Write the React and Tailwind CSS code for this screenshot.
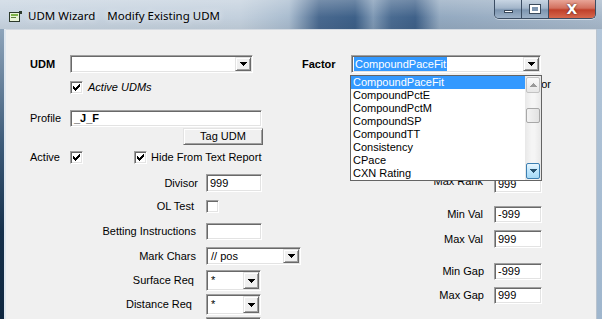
import React from "react";

const sunken =
  "bg-white border border-t-[#a0a0a0] border-l-[#a0a0a0] border-b-white border-r-white shadow-[inset_1px_1px_0_#696969,inset_-1px_-1px_0_#e3e3e3]";
const raised =
  "bg-[#f0f0f0] border border-t-[#e3e3e3] border-l-[#e3e3e3] border-b-[#696969] border-r-[#696969] shadow-[inset_1px_1px_0_#ffffff,inset_-1px_-1px_0_#a0a0a0]";

function Arrow({ color = "#000" }) {
  return (
    <svg width="7" height="4" shapeRendering="crispEdges">
      <rect x="0" y="0" width="7" height="1" fill={color} />
      <rect x="1" y="1" width="5" height="1" fill={color} />
      <rect x="2" y="2" width="3" height="1" fill={color} />
      <rect x="3" y="3" width="1" height="1" fill={color} />
    </svg>
  );
}

function Combo({ className = "", children }) {
  return (
    <div className={`${sunken} flex p-px ${className}`}>
      <div className="flex-1 flex items-center pl-[3px] overflow-hidden whitespace-nowrap">{children}</div>
      <div className={`${raised} w-[16px] flex items-center justify-center`}>
        <Arrow />
      </div>
    </div>
  );
}

function TextBox({ className = "", children }) {
  return <div className={`${sunken} flex items-center pl-[3px] whitespace-nowrap ${className}`}>{children}</div>;
}

function Check({ checked }) {
  // classic 7x7 tick, one column at a time
  const cols = [2, 3, 4, 3, 2, 1, 0];
  return (
    <div className={`${sunken} w-[13px] h-[13px] flex items-center justify-center shrink-0`}>
      {checked && (
        <svg width="7" height="7" shapeRendering="crispEdges">
          {cols.map((y, x) => (
            <rect key={x} x={x} y={y} width="1" height="3" fill="#000" />
          ))}
        </svg>
      )}
    </div>
  );
}

function Row({ label, pr, mt, h, children }) {
  return (
    <div className={`flex items-center ${mt} ${h}`}>
      <div className={`w-[200px] text-right ${pr}`}>{label}</div>
      {children}
    </div>
  );
}

function RRow({ label, pr, mt, h, labelClass = "", children }) {
  return (
    <div className={`flex items-center ${mt} ${h}`}>
      <div className={`w-[192px] text-right ${pr} ${labelClass}`}>{label}</div>
      {children}
    </div>
  );
}

const factors = [
  "CompoundPaceFit",
  "CompoundPctE",
  "CompoundPctM",
  "CompoundSP",
  "CompoundTT",
  "Consistency",
  "CPace",
  "CXN Rating",
];

function TitleBar() {
  return (
    <div className="h-[29px] shrink-0 flex items-start bg-[linear-gradient(90deg,#c9d5e1_0%,#c3d0dd_40%,#a9bccf_48%,#49698f_53%,#3d6088_59%,#7f99b5_62%,#4a6b91_65%,#3f6189_69%,#93a9c0_73%,#a8b9cb_100%)] relative">
      <div className="absolute inset-0 bg-[linear-gradient(180deg,rgba(255,255,255,0.25)_0%,rgba(255,255,255,0)_60%,rgba(0,0,0,0.05)_100%)]" />
      <div className="relative flex items-center pt-[9px] pl-[9px]">
        <svg width="13" height="11" viewBox="0 0 13 11" shapeRendering="crispEdges">
          <rect x="0.5" y="1.5" width="10" height="9" fill="#eaf4d8" stroke="#2c3a2c" />
          <rect x="2" y="3" width="7" height="2" fill="#7fb34a" />
          <rect x="2" y="6" width="5" height="1" fill="#5a7f3a" />
          <rect x="10" y="0" width="3" height="3" fill="#2c3a2c" />
        </svg>
        <span className="ml-[6px] font-['Noto_Sans',sans-serif] text-[11.5px] leading-[14px] text-black [text-shadow:0_0_6px_rgba(255,255,255,0.9)] whitespace-pre">
          UDM Wizard    Modify Existing UDM
        </span>
      </div>
      <div className="relative ml-auto mr-[6px] flex h-[19px] rounded-b-[5px] border border-t-0 border-[#3b4d63] overflow-hidden shadow-[0_1px_0_rgba(255,255,255,0.5)]">
        <div className="w-[27px] flex items-center justify-center border-r border-[#3b4d63] bg-[linear-gradient(180deg,#c8d5e3_0%,#a3b6ca_45%,#7d95b0_55%,#9db2c8_100%)]">
          <div className="w-[9px] h-[3px] bg-white border border-[#3a4a5c] mt-[4px]" />
        </div>
        <div className="w-[27px] flex items-center justify-center border-r border-[#3b4d63] bg-[linear-gradient(180deg,#c8d5e3_0%,#a3b6ca_45%,#7d95b0_55%,#9db2c8_100%)]">
          <div className="w-[10px] h-[8px] border-2 border-white outline outline-1 outline-[#3a4a5c] bg-[#7d95b0]" />
        </div>
        <div className="w-[46px] flex items-center justify-center bg-[linear-gradient(180deg,#e8a597_0%,#d2705e_45%,#c0402a_55%,#d6684d_100%)]">
          <span className="font-['DejaVu_Sans',sans-serif] font-bold text-[14px] leading-none text-white [text-shadow:0_0_2px_#3a1a10]">X</span>
        </div>
      </div>
    </div>
  );
}

function DropList() {
  return (
    <div className="absolute left-[344px] top-[45px] w-[192px] h-[106px] bg-white border border-[#646464] flex">
      <div className="flex-1 flex flex-col">
        {factors.map((f, i) => (
          <div
            key={f}
            className={`h-[13px] leading-[13px] pl-[2px] whitespace-nowrap ${i === 0 ? "bg-[#3399ff] text-white" : ""}`}
          >
            {f}
          </div>
        ))}
      </div>
      <div className="w-[16px] flex flex-col bg-[linear-gradient(90deg,#e8e8e8,#f5f5f5_40%,#f5f5f5_60%,#e8e8e8)] p-px">
        <div className="h-[16px] rounded-[2px] border border-[#c2c2c2] bg-[linear-gradient(180deg,#fafafa,#e6e6e6)] flex items-center justify-center">
          <svg width="7" height="4" shapeRendering="crispEdges">
            <rect x="3" y="0" width="1" height="1" fill="#9a9a9a" />
            <rect x="2" y="1" width="3" height="1" fill="#9a9a9a" />
            <rect x="1" y="2" width="5" height="1" fill="#9a9a9a" />
            <rect x="0" y="3" width="7" height="1" fill="#9a9a9a" />
          </svg>
        </div>
        <div className="mt-[15px] h-[15px] rounded-[2px] border border-[#a8a8a8] bg-[linear-gradient(90deg,#f3f3f3,#e2e2e2)]" />
        <div className="mt-auto h-[16px] rounded-[2px] border border-[#3c7fb1] bg-[linear-gradient(180deg,#eaf6fd,#bee6fd_50%,#a7d9f5)] flex items-center justify-center">
          <Arrow color="#27506d" />
        </div>
      </div>
    </div>
  );
}

export default function App() {
  return (
    <div className="w-[602px] h-[319px] overflow-hidden flex flex-col font-['Liberation_Sans',Arial,sans-serif] text-[11px] leading-[13px] text-black">
      <TitleBar />
      <div className="flex flex-1 min-h-0">
        <div className="w-[6px] shrink-0 border-r-2 border-[#dfe7ef] bg-[linear-gradient(180deg,#8ea4ba_0%,#3c5a78_40%,#15304b_70%,#0f2740_100%)]" />
        <div className="flex-1 bg-[#f0f0f0] relative flex border-t border-[#d5dbe2]">
          {/* left column */}
          <div className="w-[296px] flex flex-col">
            <div className="mt-[25px] flex items-center h-[18px]">
              <div className="w-[64px] pl-[24px] font-bold">UDM</div>
              <Combo className="w-[183px] h-[18px]" />
            </div>
            <div className="mt-[8px] flex items-center h-[13px] pl-[64px]">
              <Check checked />
              <span className="ml-[5px] italic">Active UDMs</span>
            </div>
            <div className="mt-[16px] flex items-center h-[17px]">
              <div className="w-[64px] pl-[24px]">Profile</div>
              <TextBox className="w-[192px] h-[17px] font-bold">_J_F</TextBox>
            </div>
            <div className="mt-px pl-[177px] flex">
              <button className={`${raised} w-[80px] h-[17px] leading-[13px]`}>Tag UDM</button>
            </div>
            <div className="mt-[6px] flex items-center h-[13px]">
              <div className="w-[64px] pl-[24px]">Active</div>
              <Check checked />
              <div className="ml-[51px]">
                <Check checked />
              </div>
              <span className="ml-[4px]">Hide From Text Report</span>
            </div>
            <Row label="Divisor" pr="pr-[8px]" mt="mt-[10px]" h="h-[18px]">
              <TextBox className="w-[56px] h-[18px]">999</TextBox>
            </Row>
            <Row label="OL Test" pr="pr-[12px]" mt="mt-[8px]" h="h-[13px]">
              <Check />
            </Row>
            <Row label="Betting Instructions" pr="pr-[10px]" mt="mt-[10px]" h="h-[17px]">
              <TextBox className="w-[56px] h-[17px]" />
            </Row>
            <Row label="Mark Chars" pr="pr-[10px]" mt="mt-[7px]" h="h-[18px]">
              <Combo className="w-[95px] h-[18px]">// pos</Combo>
            </Row>
            <Row label="Surface Req" pr="pr-[12px]" mt="mt-[5px]" h="h-[21px]">
              <Combo className="w-[55px] h-[21px]">*</Combo>
            </Row>
            <Row label="Distance Req" pr="pr-[14px]" mt="mt-[3px]" h="h-[21px]">
              <Combo className="w-[55px] h-[21px]">*</Combo>
            </Row>
            {/* next combo, only its top edge shows */}
            <div className="mt-[2px] h-[21px] pl-[200px] flex">
              <Combo className="w-[55px] h-[21px]" />
            </div>
          </div>

          {/* right column */}
          <div className="flex-1 flex flex-col">
            <div className="mt-[25px] flex items-center h-[18px]">
              <div className="w-[49px] font-bold">Factor</div>
              <Combo className="w-[190px] h-[18px]">
                <span className="bg-[#3399ff] text-white px-px -ml-[2px] leading-[14px]">CompoundPaceFit</span>
              </Combo>
            </div>
            <div className="mt-[5px] h-[13px] w-[249px] text-right">Reverse Factor</div>
            <RRow label="Max Rank" pr="pr-[11px]" mt="mt-[84px]" h="h-[18px]" labelClass="self-start">
              <TextBox className="w-[48px] h-[18px]">999</TextBox>
            </RRow>
            <RRow label="Min Val" pr="pr-[11px]" mt="mt-[13px]" h="h-[17px]">
              <TextBox className="w-[48px] h-[17px]">-999</TextBox>
            </RRow>
            <RRow label="Max Val" pr="pr-[11px]" mt="mt-[7px]" h="h-[18px]">
              <TextBox className="w-[48px] h-[18px]">999</TextBox>
            </RRow>
            <RRow label="Min Gap" pr="pr-[10px]" mt="mt-[15px]" h="h-[17px]">
              <TextBox className="w-[48px] h-[17px]">-999</TextBox>
            </RRow>
            <RRow label="Max Gap" pr="pr-[10px]" mt="mt-[7px]" h="h-[17px]">
              <TextBox className="w-[48px] h-[17px]">999</TextBox>
            </RRow>
          </div>

          <DropList />
        </div>
        <div className="w-[6px] shrink-0 border-l border-[#b9c3ce] bg-[linear-gradient(180deg,#b3c6d9,#9fb6cd)]" />
      </div>
    </div>
  );
}
